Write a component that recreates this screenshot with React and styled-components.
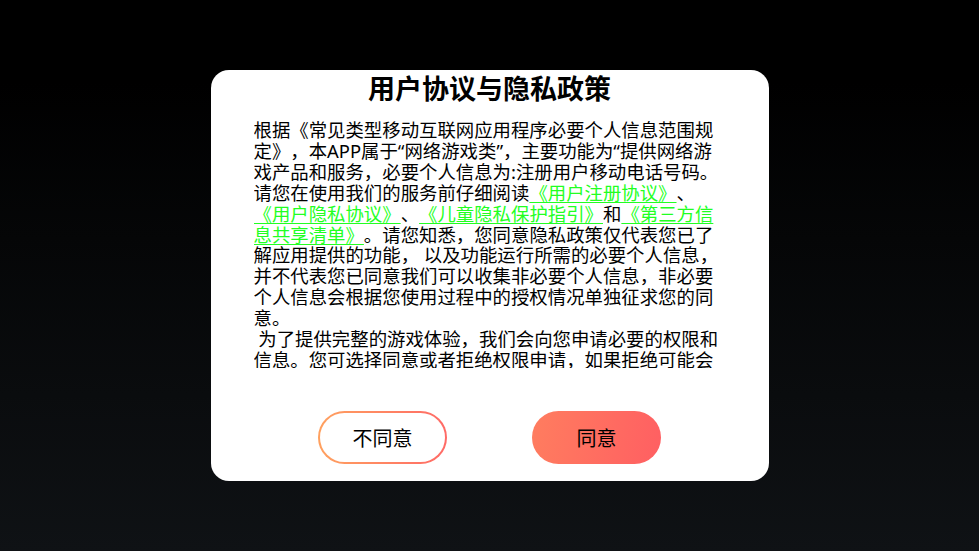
import styled, { createGlobalStyle } from 'styled-components';

const GlobalStyle = createGlobalStyle`
  html, body {
    margin: 0;
    padding: 0;
  }

  body {
    font-family: "Noto Sans", "Noto Sans CJK SC", sans-serif;
    background: #000;
    text-spacing-trim: space-all;
  }
`;

const Screen = styled.div`
  width: 100vw;
  height: 100vh;
  display: flex;
  align-items: center;
  justify-content: center;
  background: linear-gradient(180deg, #000 0%, #000 15%, #0f1215 100%);
`;

const Dialog = styled.section`
  width: 558px;
  height: 411px;
  box-sizing: border-box;
  background: #fff;
  border-radius: 18px;
  display: flex;
  flex-direction: column;
  align-items: center;
`;

const Title = styled.h1`
  margin: 0;
  font-family: "Noto Sans CJK SC", sans-serif;
  font-size: 27px;
  line-height: 36px;
  font-weight: bold;
  color: #000;
`;

const Content = styled.div`
  margin-top: 14px;
  width: 472px;
  height: 248px;
  overflow: hidden;
  font-size: 18.4px;
  line-height: 20.9px;
  color: #000;
  text-spacing-trim: space-all;

  p {
    margin: 0;
    white-space: pre-wrap;
  }
`;

const Link = styled.a`
  color: #22ff22;
  text-decoration: underline;
  text-decoration-thickness: 1px;
  text-underline-offset: 2px;
  cursor: pointer;
`;

const Actions = styled.div`
  margin-top: 43px;
  display: flex;
  gap: 85px;
`;

const Button = styled.button`
  width: 129px;
  height: 53px;
  box-sizing: border-box;
  border-radius: 27px;
  font-family: "Noto Sans CJK SC", sans-serif;
  font-size: 20px;
  color: #000;
  cursor: pointer;
  border: 2px solid transparent;
  background: ${({ $primary }) =>
    $primary
      ? 'linear-gradient(100deg, #ff7d5f 0%, #ff5f62 100%) border-box'
      : 'linear-gradient(#fff, #fff) padding-box, linear-gradient(90deg, #ffa15f 0%, #ff6a66 100%) border-box'};
`;

export default function App() {
  return (
    <Screen>
      <GlobalStyle />
      <Dialog>
        <Title>用户协议与隐私政策</Title>
        <Content>
          <p>
            根据《常见类型移动互联网应用程序必要个人信息范围规定》，本APP属于“网络游戏类”，主要功能为“提供网络游戏产品和服务，必要个人信息为:注册用户移动电话号码。请您在使用我们的服务前仔细阅读
            <Link>《用户注册协议》</Link>
            、
            <Link>《用户隐私协议》</Link>
            、
            <Link>《儿童隐私保护指引》</Link>
            和
            <Link>《第三方信息共享清单》</Link>
            。请您知悉，您同意隐私政策仅代表您已了解应用提供的功能， 以及功能运行所需的必要个人信息，并不代表您已同意我们可以收集非必要个人信息，非必要个人信息会根据您使用过程中的授权情况单独征求您的同意。
          </p>
          <p>
            {' 为了提供完整的游戏体验，我们会向您申请必要的权限和信息。您可选择同意或者拒绝权限申请，如果拒绝可能会导致部分体验异常，但不影响您使用游戏的基本功能。'}
          </p>
        </Content>
        <Actions>
          <Button>不同意</Button>
          <Button $primary>同意</Button>
        </Actions>
      </Dialog>
    </Screen>
  );
}
